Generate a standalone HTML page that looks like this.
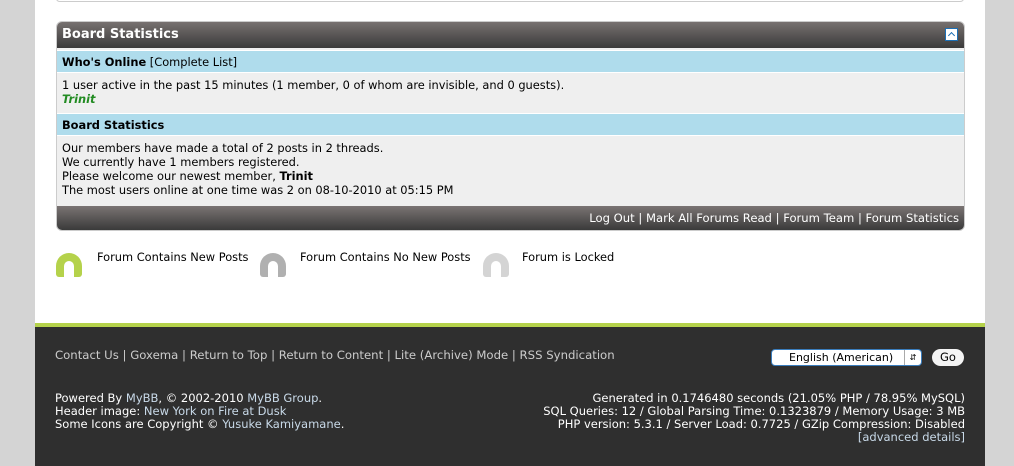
<!DOCTYPE html>
<html><head><style>
*{margin:0;padding:0;box-sizing:border-box}
body{width:1014px;height:466px;background:#d4d4d4;font-family:"DejaVu Sans","Liberation Sans",sans-serif;font-size:11.4px;color:#000;overflow:hidden;position:relative}
#wrap{position:absolute;left:35px;top:0;width:950px;height:323px;background:#fff}
#prev{position:absolute;left:21px;top:-5px;width:908px;height:7px;border:1px solid #ccc;border-radius:4px}
#tbl{position:absolute;left:21px;top:21px;width:909px;height:210px;border:1px solid #ccc;border-radius:6px;overflow:hidden;background:#efefef}
.thead{height:26px;background:linear-gradient(#777170,#3a3a3a);color:#fff;font-weight:bold;font-size:13px;padding:5px 5px;position:relative}
.tog{position:absolute;right:6px;top:6px;width:13px;height:13px;border:1px solid #1c6fb5;background:#fff}
.tog:after{content:"";position:absolute;left:3px;top:4px;width:4px;height:4px;border-left:1px solid #1c6fb5;border-top:1px solid #1c6fb5;transform:rotate(45deg)}
.tcat{background:#afdcec;height:23px;padding:4px 5px;border-top:1px solid #fff;border-bottom:1px solid #fff}
.trow{padding:4px 5px;line-height:14px}
.tfoot{position:absolute;left:0;right:0;bottom:0;height:24px;background:linear-gradient(#7a7473,#3a3a3a);color:#fff;text-align:right;padding:5px 5px;font-size:11.6px}
.leg{position:absolute;top:250px;font-size:11.4px}
.ic{position:absolute;top:253px;width:26px;height:24px;border-radius:13px 13px 3px 3px}
.ic:after{content:"";position:absolute;left:8px;top:8px;width:10px;height:16px;background:#fff;border-radius:5px 5px 0 0}
#green{position:absolute;left:35px;top:323px;width:950px;height:4px;background:#b5d24b}
#foot{position:absolute;left:35px;top:327px;width:950px;height:139px;background:#2f2f2f;color:#fff;font-size:11.5px}
.lk{color:#c8d9e8}
.fl{color:#ccc}
</style></head><body>
<div id="wrap">
<div id="prev"></div>
<div id="tbl">
<div class="thead">Board Statistics<div class="tog"></div></div>
<div class="tcat" style="margin-top:2px"><b>Who's Online</b> [Complete List]</div>
<div class="trow" style="height:40px;padding-top:5px">1 user active in the past 15 minutes (1 member, 0 of whom are invisible, and 0 guests).<br><b><i style="color:#228b22">Trinit</i></b></div>
<div class="tcat"><b>Board Statistics</b></div>
<div class="trow" style="padding-top:5px">Our members have made a total of 2 posts in 2 threads.<br>We currently have 1 members registered.<br>Please welcome our newest member, <b>Trinit</b><br>The most users online at one time was 2 on 08-10-2010 at 05:15 PM</div>
<div class="tfoot">Log Out | Mark All Forums Read | Forum Team | Forum Statistics</div>
</div>
</div>
<div class="ic" style="left:56px;background:#b5d24b"></div><div class="leg" style="left:97px">Forum Contains New Posts</div>
<div class="ic" style="left:260px;background:#b0b0b0"></div><div class="leg" style="left:300px">Forum Contains No New Posts</div>
<div class="ic" style="left:483px;background:#d4d4d4"></div><div class="leg" style="left:522px">Forum is Locked</div>
<div id="green"></div>
<div id="foot">
<div class="fl" style="position:absolute;left:20px;top:21px;font-size:11.7px">Contact Us | Goxema | Return to Top | Return to Content | Lite (Archive) Mode | RSS Syndication</div>
<div style="position:absolute;left:736px;top:22px;width:151px;height:17px;border-radius:4px;background:#fff;border:1px solid #3a7dbd;color:#000;font-size:11px;padding:1px 0 0 17px">English (American)<span style="position:absolute;right:0;top:0;width:17px;height:15px;border-left:1px solid #aaa;text-align:center;font-size:8px;line-height:15px">&#8693;</span></div>
<div style="position:absolute;left:897px;top:22px;width:32px;height:17px;border-radius:9px;background:#f4f4f4;color:#000;text-align:center;line-height:17px">Go</div>
<div style="position:absolute;left:20px;top:65px;line-height:13px">Powered By <span class="lk">MyBB</span>, © 2002-2010 <span class="lk">MyBB Group</span>.<br>Header image: <span class="lk">New York on Fire at Dusk</span><br>Some Icons are Copyright © <span class="lk">Yusuke Kamiyamane</span>.</div>
<div style="position:absolute;right:20px;top:65px;line-height:13px;text-align:right">Generated in 0.1746480 seconds (21.05% PHP / 78.95% MySQL)<br>SQL Queries: 12 / Global Parsing Time: 0.1323879 / Memory Usage: 3 MB<br>PHP version: 5.3.1 / Server Load: 0.7725 / GZip Compression: Disabled<br><span class="lk">[advanced details]</span></div>
</div>
</body></html>
